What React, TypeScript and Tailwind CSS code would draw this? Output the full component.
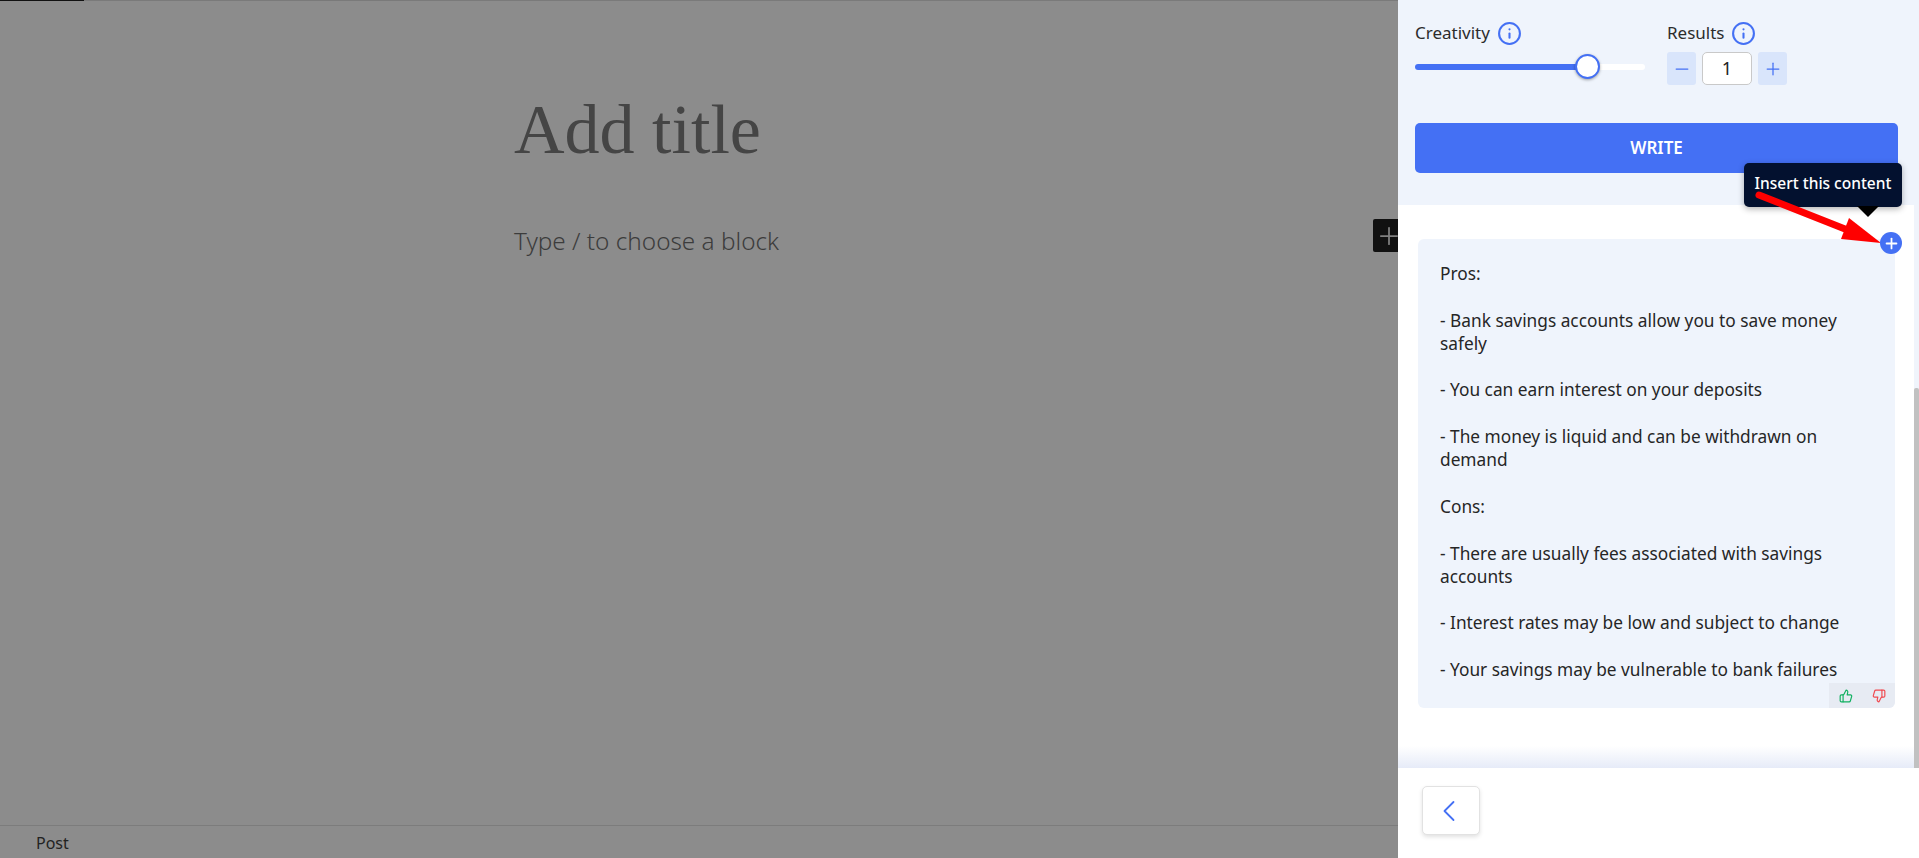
import { ChevronLeft, Info, Minus, Plus, ThumbsDown, ThumbsUp } from 'lucide-react'

const font = { fontFamily: '"Noto Sans", sans-serif' }

const answer = `Pros:

- Bank savings accounts allow you to save money safely

- You can earn interest on your deposits

- The money is liquid and can be withdrawn on demand

Cons:

- There are usually fees associated with savings accounts

- Interest rates may be low and subject to change

- Your savings may be vulnerable to bank failures`

const Editor = () => (
  <div className="flex w-[1398px] flex-col bg-[#8c8c8c]">
    <div className="h-px bg-[#7a7a7a]">
      <div className="h-px w-[84px] bg-[#111]" />
    </div>
    <div className="flex flex-1 flex-col pl-[514px] pt-[83px]">
      <h1 className="font-['Liberation_Serif',serif] text-[70px] leading-[92px] font-normal text-[#454545]">Add title</h1>
      <div className="flex items-start justify-between pt-[47px]">
        <p className="text-[24.3px] leading-[36px] font-light text-[#3c3c3c]">Type / to choose a block</p>
        <div className="-mt-[4px] flex h-[33px] w-[25px] items-center overflow-hidden rounded-l-[2px] bg-[#111] pl-[2px] text-[#808080]">
          <Plus size={28} strokeWidth={1.5} className="shrink-0" />
        </div>
      </div>
    </div>
    <div className="flex h-[33px] items-center border-t border-[#7c7c7c] pl-9 pt-[2px] text-[16px] text-[#222]">Post</div>
  </div>
)

const Stepper = () => (
  <div className="flex w-[120px] items-center justify-between">
    <button className="flex h-[33px] w-[29px] items-center justify-center rounded-[3px] bg-[#d9e5fb] text-[#4470f4]">
      <Minus size={20} strokeWidth={1.5} />
    </button>
    <div className="flex h-[33px] w-[50px] items-center justify-center rounded-[5px] border border-[#c9c9c9] bg-white text-[18px] text-[#222]">1</div>
    <button className="flex h-[33px] w-[29px] items-center justify-center rounded-[3px] bg-[#d9e5fb] text-[#4470f4]">
      <Plus size={20} strokeWidth={1.5} />
    </button>
  </div>
)

const Controls = () => (
  <section className="h-[205px] shrink-0 bg-[#eff4fc] pl-[17px] pr-[21px] pt-[20px]">
    <div className="flex gap-[22px]">
      <div className="w-[230px]">
        <div className="flex h-[26px] items-center gap-[7px] text-[17px] text-[#2c2c2c]">
          Creativity <Info size={25} strokeWidth={2} className="text-[#4470f4]" />
        </div>
        <div className="relative mt-[18px] h-[6px] rounded-full bg-white">
          <div className="h-[6px] w-[173px] rounded-full bg-[#4470f4]" />
          <div className="absolute left-[160px] top-[-10px] h-[25px] w-[25px] rounded-full border-2 border-[#4470f4] bg-white shadow-[0_1px_3px_rgba(0,0,0,0.35)]" />
        </div>
      </div>
      <div>
        <div className="flex h-[26px] items-center gap-[7px] text-[17px] text-[#2c2c2c]">
          Results <Info size={25} strokeWidth={2} className="text-[#4470f4]" />
        </div>
        <div className="mt-[6px]">
          <Stepper />
        </div>
      </div>
    </div>
    <button className="mt-[38px] flex h-[50px] w-full items-center justify-center rounded-[5px] bg-[#4470f4] text-[17px] font-semibold text-white">WRITE</button>
  </section>
)

const Answer = () => (
  <div className="relative ml-[20px] mr-[19px] mt-[34px] h-[469px] rounded-[6px] bg-[#eff4fc] px-[22px] pt-[23px]">
    <p className="whitespace-pre-line text-[17.3px] leading-[23.3px] text-[#262626]">{answer}</p>
    <div className="absolute bottom-0 right-0 flex h-[25px] w-[66px] items-center justify-around rounded-br-[6px] bg-[#e7ebf3]">
      <ThumbsUp size={14} strokeWidth={2} className="text-[#10b060]" />
      <ThumbsDown size={14} strokeWidth={2} className="text-[#f04a50]" />
    </div>
  </div>
)

const Panel = () => (
  <aside className="relative flex w-[521px] flex-col bg-white" style={font}>
    <Controls />
    <div className="relative flex flex-1 bg-white">
      <div className="flex-1">
        <Answer />
      </div>
      <div className="w-[5px] bg-[#f0f4fb]">
        <div className="mt-[183px] h-[380px] rounded-t-[2px] bg-[#c1c1c1]" />
      </div>
      <div className="absolute bottom-0 left-0 right-[5px] h-[22px] bg-gradient-to-t from-[#e6ebf8] to-transparent" />
    </div>
    <div className="h-[90px] shrink-0 bg-white pl-[24px] pt-[18px]">
      <button className="flex h-[49px] w-[58px] items-center justify-center rounded-[5px] border border-[#e2e2e2] bg-white pr-[4px] text-[#4470f4] shadow-[0_2px_4px_rgba(0,0,0,0.12)]">
        <ChevronLeft size={36} strokeWidth={1.2} />
      </button>
    </div>

    <div className="absolute left-[346px] top-[163px] flex h-[44px] w-[158px] items-center justify-center rounded-[5px] bg-[#03112f] pb-[3px] text-[15.5px] font-medium text-white shadow-[0_2px_6px_rgba(0,0,0,0.3)]">
      Insert this content
      <span className="absolute left-[113px] top-[43px] h-0 w-0 border-x-[11px] border-t-[11px] border-x-transparent border-t-black" />
    </div>
    <svg className="absolute left-[355px] top-[183px]" width="140" height="70" viewBox="0 0 140 70">
      <path d="M6 12 L92 46" stroke="#ff0000" strokeWidth="7" strokeLinecap="round" fill="none" />
      <path d="M96 35 L88 56 L128 60 Z" fill="#ff0000" />
    </svg>
    <div className="absolute left-[482px] top-[232px] flex h-[22px] w-[22px] items-center justify-center rounded-full bg-[#4470f4] text-white">
      <Plus size={17} strokeWidth={2.5} />
    </div>
  </aside>
)

export default function App() {
  return (
    <div className="flex h-[858px] w-[1919px] overflow-hidden" style={font}>
      <Editor />
      <Panel />
    </div>
  )
}
